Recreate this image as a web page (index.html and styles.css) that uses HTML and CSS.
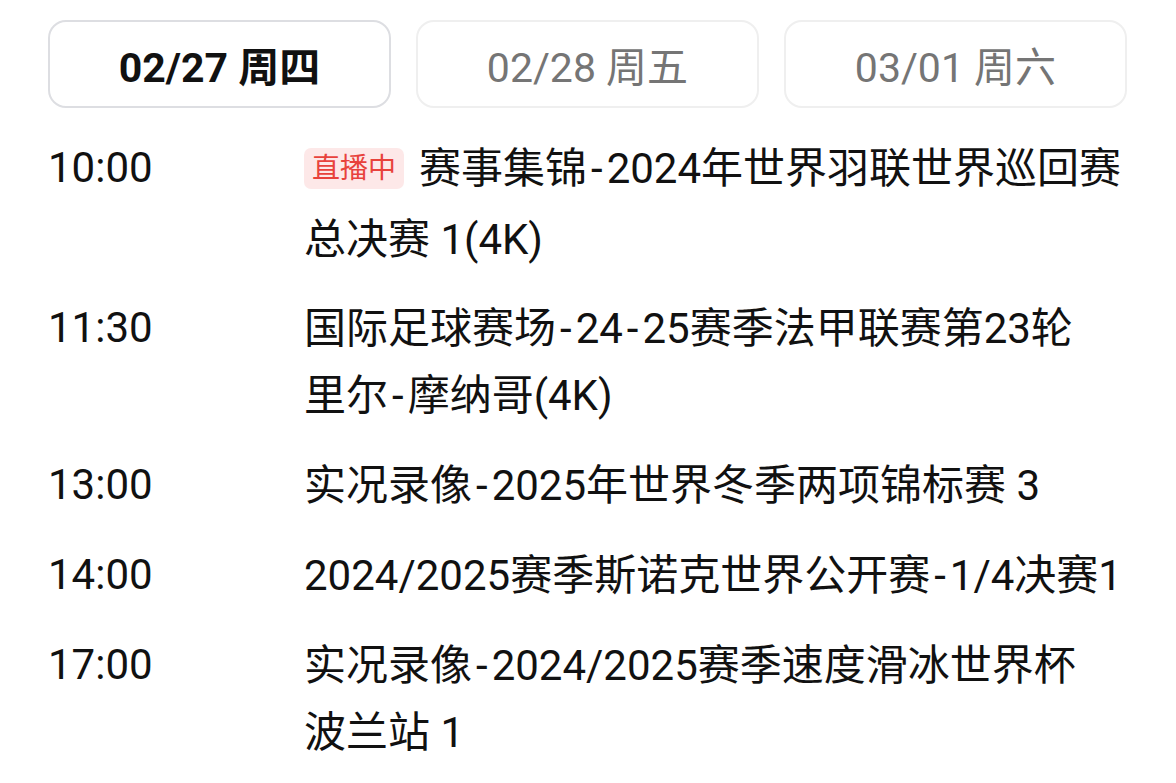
FILE: index.html
```html
<!DOCTYPE html>
<html lang="zh-CN">
<head>
<meta charset="utf-8">
<link rel="stylesheet" href="styles.css">
</head>
<body>
<div class="page">
  <div class="tabs">
    <div class="tab active">02/27 周四</div>
    <div class="tab">02/28 周五</div>
    <div class="tab">03/01 周六</div>
  </div>
  <div class="list">
    <div class="row">
      <div class="time">10:00</div>
      <div class="title first"><span class="badge">直播中</span>赛事集锦<span class="dash">-</span>2024年世界羽联世界巡回赛<br>总决赛 1(4K)</div>
    </div>
    <div class="row">
      <div class="time">11:30</div>
      <div class="title">国际足球赛场<span class="dash">-</span>24<span class="dash">-</span>25赛季法甲联赛第23轮<br>里尔<span class="dash">-</span>摩纳哥(4K)</div>
    </div>
    <div class="row">
      <div class="time">13:00</div>
      <div class="title">实况录像<span class="dash">-</span>2025年世界冬季两项锦标赛 3</div>
    </div>
    <div class="row">
      <div class="time">14:00</div>
      <div class="title">2024/2025赛季斯诺克世界公开赛<span class="dash">-</span>1/4决赛1</div>
    </div>
    <div class="row">
      <div class="time">17:00</div>
      <div class="title">实况录像<span class="dash">-</span>2024/2025赛季速度滑冰世界杯<br>波兰站 1</div>
    </div>
  </div>
</div>
</body>
</html>
```

FILE: styles.css
```css
html, body {
  margin: 0;
  padding: 0;
  background: #ffffff;
}
body {
  font-family: Roboto, "Noto Sans CJK SC", sans-serif;
  color: #111111;
}
.page {
  width: 1176px;
  height: 783px;
  box-sizing: border-box;
  padding: 20px 48px 0 48px;
  overflow: hidden;
}
.tabs {
  display: flex;
  gap: 25px;
}
.tab {
  flex: 0 0 343px;
  height: 88px;
  box-sizing: border-box;
  border: 2px solid #efefef;
  border-radius: 18px;
  display: flex;
  align-items: center;
  justify-content: center;
  font-size: 41px;
  color: #757575;
}
.tab.active {
  border-color: #dddee2;
  color: #111111;
  font-weight: 700;
}
.list {
  display: flex;
  flex-direction: column;
  gap: 23px;
  margin-top: 27px;
}
.row {
  display: flex;
  align-items: flex-start;
}
.time {
  flex: 0 0 256px;
  font-size: 42px;
  line-height: 66px;
}
.title {
  flex: 1;
  font-size: 42px;
  line-height: 67px;
  white-space: nowrap;
}
.title.first {
  line-height: 71px;
  margin-top: -2px;
  margin-bottom: -3px;
}
.dash {
  padding: 0 4px;
}
.badge {
  display: inline-block;
  height: 41px;
  line-height: 41px;
  padding: 0 8px;
  margin-right: 15px;
  border-radius: 7px;
  background: #fde8e8;
  color: #e8423c;
  font-size: 28px;
  vertical-align: 5px;
}
```
